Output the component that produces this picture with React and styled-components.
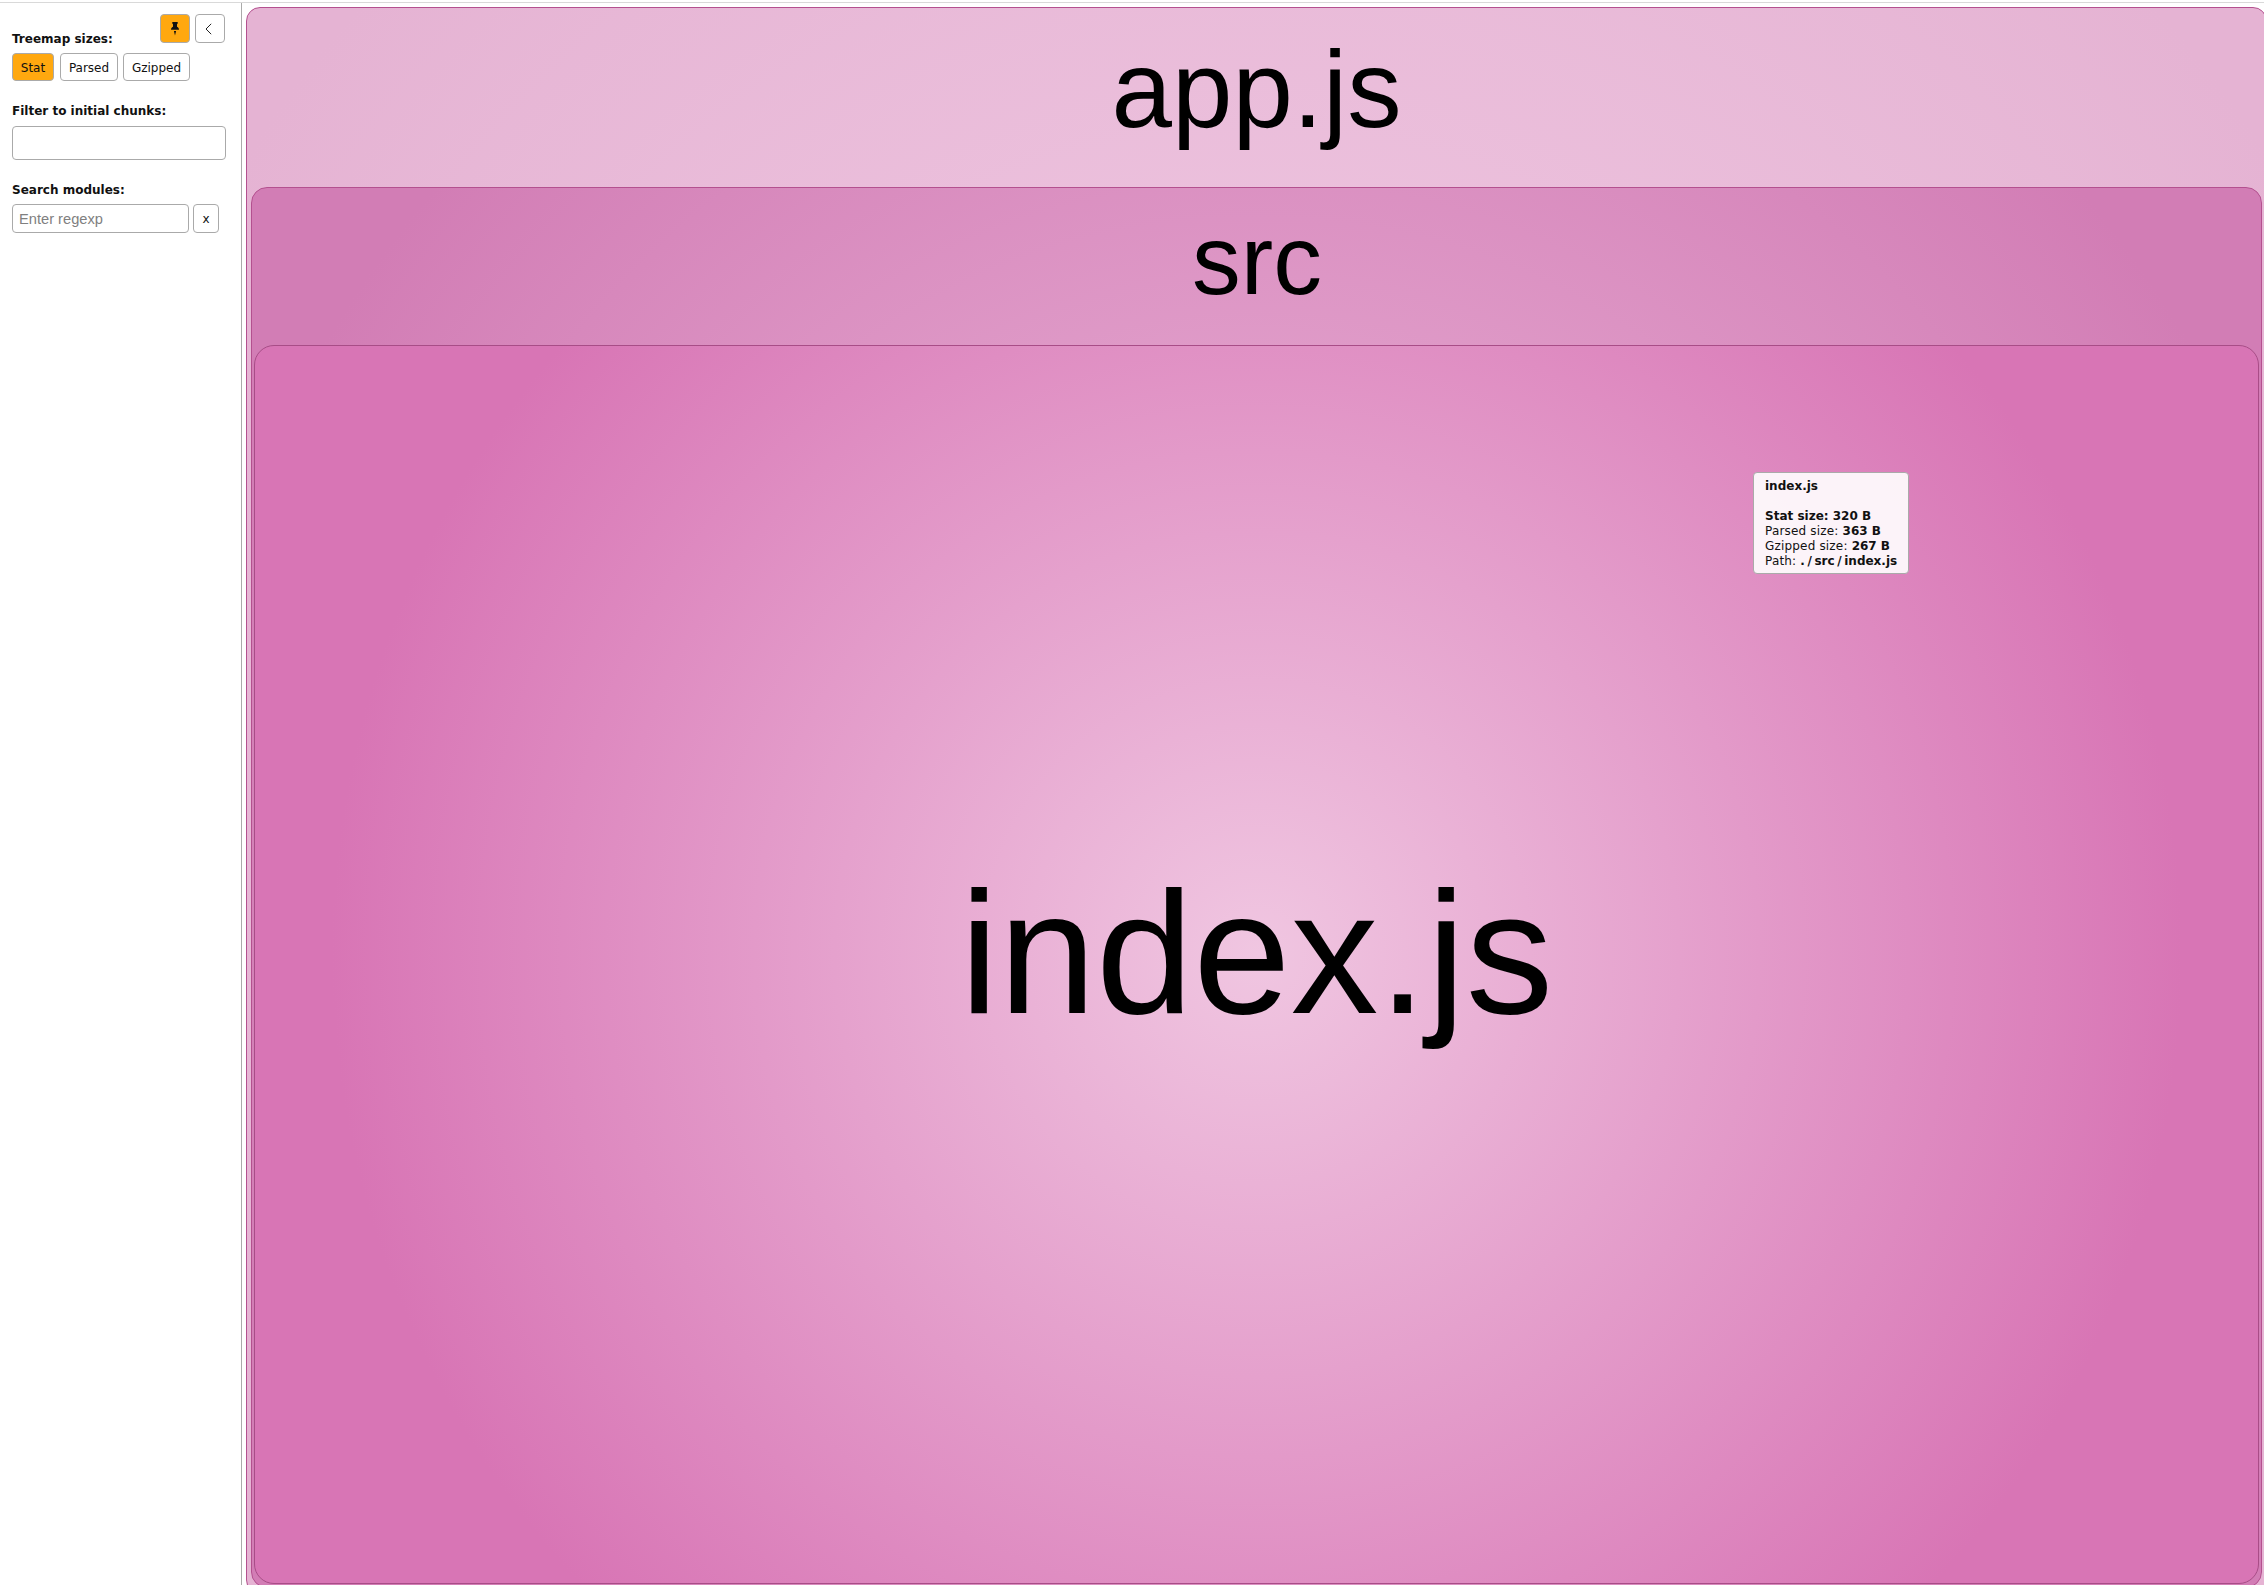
import React from "react";
import styled, { createGlobalStyle } from "styled-components";

const GlobalStyle = createGlobalStyle`
  * { box-sizing: border-box; }
  html, body { margin: 0; height: 100%; overflow: hidden; background: #fff; }
  body { font: 12px "DejaVu Sans", Verdana, sans-serif; color: #111; }
`;

const Page = styled.div`
  display: flex;
  position: relative;
  width: 2264px;
  height: 1585px;
  padding-top: 3px;
  overflow: hidden;
  background: linear-gradient(#fff 2px, #d9d9d9 2px, #d9d9d9 3px, #fff 3px);
`;

const Sidebar = styled.aside`
  flex: none;
  width: 242px;
  height: 1582px;
  padding: 11px 15px 0 12px;
  border-right: 1px solid #aaa;
  display: flex;
  flex-direction: column;
`;

const Toolbar = styled.div`
  display: flex;
  justify-content: flex-end;
  gap: 5px;
  height: 29px;
  margin-right: 1px;
`;

const Button = styled.button`
  flex: none;
  display: flex;
  align-items: center;
  justify-content: center;
  width: ${(p) => p.$w}px;
  height: ${(p) => p.$h || 28}px;
  padding: ${(p) => p.$drop || 0}px ${(p) => p.$shift || 0}px 0 0;
  border: 1px solid #aaa;
  border-radius: 4px;
  background: ${(p) => (p.$active ? "#ffa80f" : "#fff")};
  color: #111;
  font: 12px "DejaVu Sans", Verdana, sans-serif;
`;

const Label = styled.div`
  height: 14px;
  line-height: 14px;
  font-weight: 700;
  white-space: nowrap;
  margin-top: ${(p) => p.$top}px;
`;

const Row = styled.div`
  display: flex;
  margin-top: 7px;
`;

const SizeRow = styled(Row)`
  gap: 5px;
  & > :first-child { margin-right: 1px; }
`;

const SearchRow = styled(Row)`
  gap: 4px;
`;

const ChunkBox = styled.div`
  width: 214px;
  height: 34px;
  margin-top: 8px;
  border: 1px solid #aaa;
  border-radius: 4px;
`;

const SearchInput = styled.input`
  width: 177px;
  height: 29px;
  padding: 0 6px;
  border: 1px solid #aaa;
  border-radius: 4px;
  outline: none;
  background: #fff;
  font: 14.67px "Liberation Sans", Arial, sans-serif;
  &::placeholder { color: #808080; opacity: 1; }
`;

const Treemap = styled.main`
  flex: none;
  width: 2021px;
  height: 1587px;
  margin: 4px 0 0 4px;
`;

const Group = styled.section`
  display: flex;
  flex-direction: column;
  width: 100%;
  height: ${(p) => p.$h}px;
  padding: ${(p) => p.$pad || "0"};
  border: 1px solid ${(p) => p.$line};
  border-radius: ${(p) => p.$r}px;
  background: ${(p) => p.$fill};
`;

const GroupTitle = styled.div`
  flex: none;
  display: flex;
  align-items: center;
  justify-content: center;
  height: ${(p) => p.$h}px;
  padding: 0 0 ${(p) => p.$lift}px ${(p) => p.$indent || 0}px;
  font: ${(p) => p.$size}px/1 "Liberation Sans", Arial, sans-serif;
  color: #000;
`;

const Tooltip = styled.div`
  position: absolute;
  left: 1753px;
  top: 472px;
  width: 156px;
  height: 102px;
  padding: 6px 11px;
  border: 1px solid #aaa;
  border-radius: 4px;
  background: rgba(255, 255, 255, 0.9);
  line-height: 15px;
  white-space: nowrap;
`;

const TooltipName = styled.div`
  font-weight: 700;
  margin-bottom: 15px;
`;

const Caption = styled.span`
  letter-spacing: 0.18px;
`;

const Slash = styled.span`
  padding: 0 2.6px;
`;

const app = "radial-gradient(circle 1200px at 1010px 793px, #f2cce5 0%, #e5b3d3 100%)";
const src = "radial-gradient(circle 1080px at 1005px 700px, #ecb7da 0%, #d27db5 100%)";
const leaf = "radial-gradient(circle 925px at 1002px 608px, #f0c6e1 0%, #d875b5 100%)";

export default function App() {
  return (
    <>
      <GlobalStyle />
      <Page>
        <Sidebar>
          <Toolbar>
            <Button $active $w={30} $h={29} $shift={1} aria-label="Pin">
              <svg width="8" height="14" viewBox="0 0 8 14">
                <path fill="#111" d="M1.300 0h5.400v1.500L6 2.200v2.600c1.300.6 2 1.500 2 3H0c0-1.500.7-2.400 2-3V2.200l-.7-.7zM2.900 9h2.200L4 13.500z" />
              </svg>
            </Button>
            <Button $w={30} $h={29} $shift={3} aria-label="Collapse">
              <svg width="7" height="12" viewBox="0 0 7 12">
                <path fill="none" stroke="#222" d="M6.200 .8 1 6l5.200 5.200" />
              </svg>
            </Button>
          </Toolbar>
          <Label $top={-11}>Treemap sizes:</Label>
          <SizeRow>
            <Button $active $w={42} $drop={1}>Stat</Button>
            <Button $w={58} $drop={1}>Parsed</Button>
            <Button $w={67} $drop={1}>Gzipped</Button>
          </SizeRow>
          <Label $top={23}>Filter to initial chunks:</Label>
          <ChunkBox />
          <Label $top={23}>Search modules:</Label>
          <SearchRow>
            <SearchInput placeholder="Enter regexp" />
            <Button $w={26} $h={29}>x</Button>
          </SearchRow>
        </Sidebar>
        <Treemap>
          <Group $h={1587} $r={14} $line="#b4508f" $fill={app} $pad="0 4px">
            <GroupTitle $h={179} $size={108.7} $lift={14}>app.js</GroupTitle>
            <Group $h={1401} $r={16} $line="#b4508f" $fill={src} $pad="0 2px">
              <GroupTitle $h={157} $size={97.5} $lift={12} $indent={1}>src</GroupTitle>
              <Group $h={1239} $r={20} $line="#a84d87" $fill={leaf}>
                <GroupTitle $h={1237} $size={175} $lift={24}>index.js</GroupTitle>
              </Group>
            </Group>
          </Group>
        </Treemap>
        <Tooltip>
          <TooltipName>index.js</TooltipName>
          <div><b>Stat size: 320 B</b></div>
          <div><Caption>Parsed size: </Caption><b>363 B</b></div>
          <div><Caption>Gzipped size: </Caption><b>267 B</b></div>
          <div><Caption>Path: </Caption><b>.<Slash>/</Slash>src<Slash>/</Slash>index.js</b></div>
        </Tooltip>
      </Page>
    </>
  );
}
